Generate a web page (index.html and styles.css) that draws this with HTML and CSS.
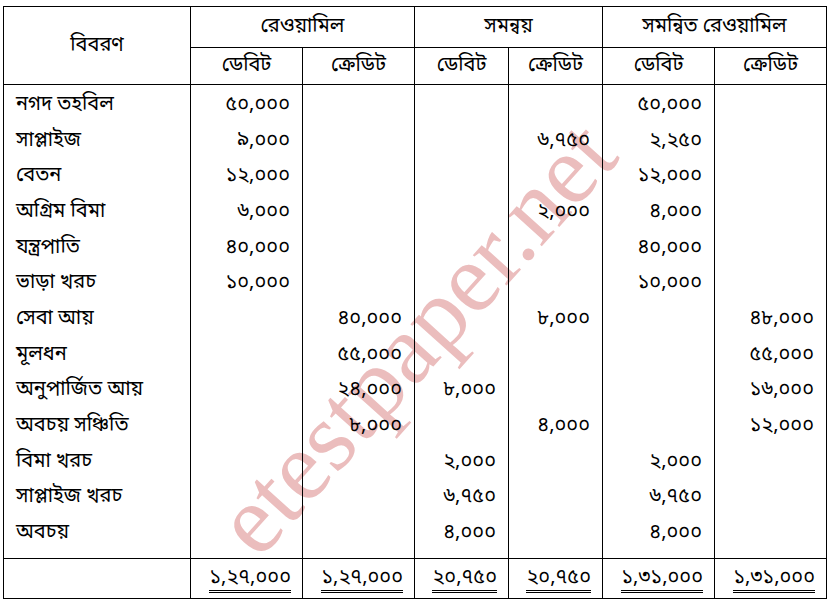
FILE: index.html
```html
<!DOCTYPE html>
<html lang="bn">
<head>
<meta charset="utf-8">
<title>রেওয়ামিল</title>
<link rel="stylesheet" href="styles.css">
</head>
<body>
<div class="page">
  <table class="ledger">
    <colgroup>
      <col class="c-desc"><col class="c-w"><col class="c-w"><col class="c-n"><col class="c-n"><col class="c-w"><col class="c-w">
    </colgroup>
    <thead>
      <tr class="h1">
        <th rowspan="2" class="desc-h">বিবরণ</th>
        <th colspan="2">রেওয়ামিল</th>
        <th colspan="2">সমন্বয়</th>
        <th colspan="2">সমন্বিত রেওয়ামিল</th>
      </tr>
      <tr class="h2">
        <th>ডেবিট</th><th>ক্রেডিট</th>
        <th>ডেবিট</th><th>ক্রেডিট</th>
        <th>ডেবিট</th><th>ক্রেডিট</th>
      </tr>
    </thead>
    <tbody>
      <tr class="first"><td>নগদ তহবিল</td><td>৫০,০০০</td><td></td><td></td><td></td><td>৫০,০০০</td><td></td></tr>
      <tr><td>সাপ্লাইজ</td><td>৯,০০০</td><td></td><td></td><td>৬,৭৫০</td><td>২,২৫০</td><td></td></tr>
      <tr><td>বেতন</td><td>১২,০০০</td><td></td><td></td><td></td><td>১২,০০০</td><td></td></tr>
      <tr><td>অগ্রিম বিমা</td><td>৬,০০০</td><td></td><td></td><td>২,০০০</td><td>৪,০০০</td><td></td></tr>
      <tr><td>যন্ত্রপাতি</td><td>৪০,০০০</td><td></td><td></td><td></td><td>৪০,০০০</td><td></td></tr>
      <tr><td>ভাড়া খরচ</td><td>১০,০০০</td><td></td><td></td><td></td><td>১০,০০০</td><td></td></tr>
      <tr><td>সেবা আয়</td><td></td><td>৪০,০০০</td><td></td><td>৮,০০০</td><td></td><td>৪৮,০০০</td></tr>
      <tr><td>মূলধন</td><td></td><td>৫৫,০০০</td><td></td><td></td><td></td><td>৫৫,০০০</td></tr>
      <tr><td>অনুপার্জিত আয়</td><td></td><td>২৪,০০০</td><td>৮,০০০</td><td></td><td></td><td>১৬,০০০</td></tr>
      <tr><td>অবচয় সঞ্চিতি</td><td></td><td>৮,০০০</td><td></td><td>৪,০০০</td><td></td><td>১২,০০০</td></tr>
      <tr><td>বিমা খরচ</td><td></td><td></td><td>২,০০০</td><td></td><td>২,০০০</td><td></td></tr>
      <tr><td>সাপ্লাইজ খরচ</td><td></td><td></td><td>৬,৭৫০</td><td></td><td>৬,৭৫০</td><td></td></tr>
      <tr class="last"><td>অবচয়</td><td></td><td></td><td>৪,০০০</td><td></td><td>৪,০০০</td><td></td></tr>
    </tbody>
    <tfoot>
      <tr class="total">
        <td></td>
        <td><span class="dbl">১,২৭,০০০</span></td>
        <td><span class="dbl">১,২৭,০০০</span></td>
        <td><span class="dbl">২০,৭৫০</span></td>
        <td><span class="dbl">২০,৭৫০</span></td>
        <td><span class="dbl">১,৩১,০০০</span></td>
        <td><span class="dbl">১,৩১,০০০</span></td>
      </tr>
    </tfoot>
  </table>
  <div class="watermark">etestpaper.net</div>
</div>
</body>
</html>
```

FILE: styles.css
```css
html, body {
  margin: 0;
  padding: 0;
  background: #fff;
}
body {
  font-family: "Noto Sans Bengali", "Noto Serif Bengali", "Lohit Bengali", "FreeSerif", "Noto Sans", sans-serif;
  color: #000;
}
.page {
  position: relative;
  width: 832px;
  height: 604px;
  padding: 6px 0 0 3px;
  box-sizing: border-box;
  overflow: hidden;
}
.ledger {
  position: relative;
  z-index: 1;
  border-collapse: collapse;
  table-layout: fixed;
  width: 823px;
  font-size: 20px;
  line-height: 24px;
}
.c-desc { width: 187px; }
.c-w { width: 112px; }
.c-n { width: 94px; }
.ledger th, .ledger td {
  border-left: 1px solid #000;
  border-right: 1px solid #000;
  padding: 0 12px;
  font-weight: normal;
  white-space: nowrap;
}
.ledger th {
  border-top: 1px solid #000;
  border-bottom: 1px solid #000;
  text-align: center;
  padding: 0;
}
.h1 th { height: 40px; }
.h2 th { height: 36px; }
.ledger tbody td {
  height: 35.7px;
  text-align: right;
}
.ledger tbody td:first-child { text-align: left; }
.ledger tbody tr.first td { padding-top: 2px; }
.ledger tbody tr.last td { padding-bottom: 7px; }
.ledger tfoot td {
  border-top: 1px solid #000;
  border-bottom: 1px solid #000;
  height: 39px;
  text-align: right;
  padding-right: 11px;
}
.dbl {
  display: inline-block;
  border-bottom: 3px double #000;
  line-height: 22px;
  padding: 0 0 1px 0;
  margin-top: 4px;
}
.watermark {
  position: absolute;
  left: 415px;
  top: 337px;
  transform: translate(-50%, -50%) rotate(-48deg);
  font-family: "Liberation Serif", serif;
  font-size: 99px;
  line-height: 1;
  color: #ebbdbd;
  white-space: nowrap;
  z-index: 0;
}
```
